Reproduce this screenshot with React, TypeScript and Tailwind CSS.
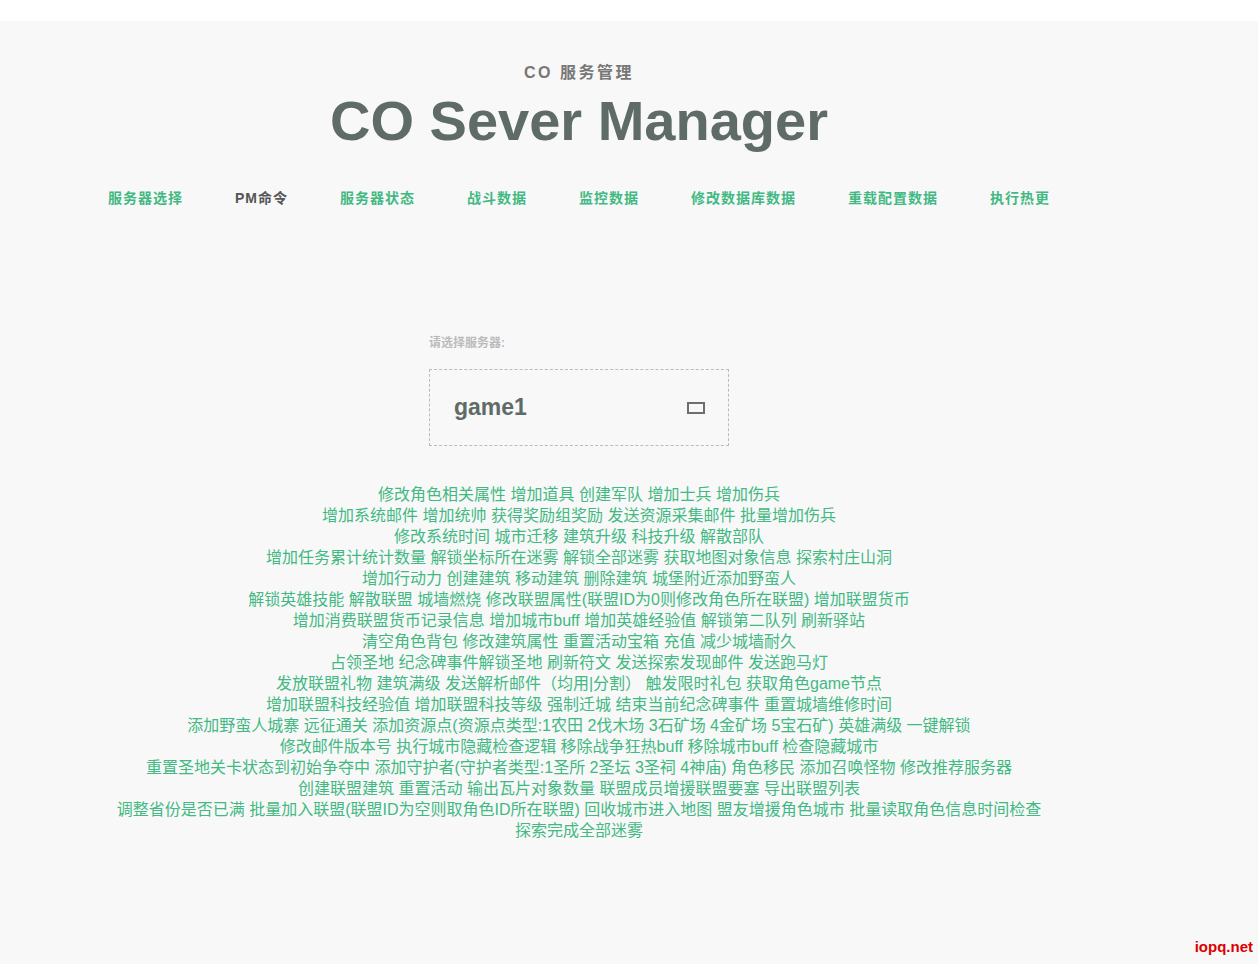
import { useState } from 'react'

const navItems = ['服务器选择', 'PM命令', '服务器状态', '战斗数据', '监控数据', '修改数据库数据', '重载配置数据', '执行热更']

const commandLines: string[][] = [
  ['修改角色相关属性', '增加道具', '创建军队', '增加士兵', '增加伤兵'],
  ['增加系统邮件', '增加统帅', '获得奖励组奖励', '发送资源采集邮件', '批量增加伤兵'],
  ['修改系统时间', '城市迁移', '建筑升级', '科技升级', '解散部队'],
  ['增加任务累计统计数量', '解锁坐标所在迷雾', '解锁全部迷雾', '获取地图对象信息', '探索村庄山洞'],
  ['增加行动力', '创建建筑', '移动建筑', '删除建筑', '城堡附近添加野蛮人'],
  ['解锁英雄技能', '解散联盟', '城墙燃烧', '修改联盟属性(联盟ID为0则修改角色所在联盟)', '增加联盟货币'],
  ['增加消费联盟货币记录信息', '增加城市buff', '增加英雄经验值', '解锁第二队列', '刷新驿站'],
  ['清空角色背包', '修改建筑属性', '重置活动宝箱', '充值', '减少城墙耐久'],
  ['占领圣地', '纪念碑事件解锁圣地', '刷新符文', '发送探索发现邮件', '发送跑马灯'],
  ['发放联盟礼物', '建筑满级', '发送解析邮件（均用|分割）', '触发限时礼包', '获取角色game节点'],
  ['增加联盟科技经验值', '增加联盟科技等级', '强制迁城', '结束当前纪念碑事件', '重置城墙维修时间'],
  ['添加野蛮人城寨', '远征通关', '添加资源点(资源点类型:1农田 2伐木场 3石矿场 4金矿场 5宝石矿)', '英雄满级', '一键解锁'],
  ['修改邮件版本号', '执行城市隐藏检查逻辑', '移除战争狂热buff', '移除城市buff', '检查隐藏城市'],
  ['重置圣地关卡状态到初始争夺中', '添加守护者(守护者类型:1圣所 2圣坛 3圣祠 4神庙)', '角色移民', '添加召唤怪物', '修改推荐服务器'],
  ['创建联盟建筑', '重置活动', '输出瓦片对象数量', '联盟成员增援联盟要塞', '导出联盟列表'],
  ['调整省份是否已满', '批量加入联盟(联盟ID为空则取角色ID所在联盟)', '回收城市进入地图', '盟友增援角色城市', '批量读取角色信息时间检查'],
  ['探索完成全部迷雾'],
]

export default function App() {
  const [active, setActive] = useState('PM命令')
  const [server] = useState('game1')

  return (
    <div className="relative h-screen bg-white pt-[21px] font-['Liberation_Sans','Noto_Sans_CJK_SC',sans-serif]">
      <div className="h-full bg-[#f8f8f8] mr-px">
        <div className="w-[1158px] flex flex-col items-center">
          <p className="mt-[41px] text-[16px] leading-[22px] font-bold tracking-[2.5px] text-[#777777]">CO 服务管理</p>
          <h1 className="mt-[9px] text-[56px] leading-[56px] font-bold text-[#5f6b66]">CO Sever Manager</h1>

          <nav className="mt-[39px] flex">
            {navItems.map((item) => (
              <a
                key={item}
                href="#"
                onClick={(e) => {
                  e.preventDefault()
                  setActive(item)
                }}
                className={`px-[26px] text-[14px] leading-[20px] font-bold tracking-[1px] ${active === item ? 'text-[#555555]' : 'text-[#42b983]'}`}
              >
                {item}
              </a>
            ))}
          </nav>

          <div className="mt-[127px] w-[300px]">
            <p className="text-[12px] leading-[16px] font-bold text-[#bbbbbb]">请选择服务器:</p>
            <div className="mt-[18px] h-[77px] flex items-center justify-between border border-dashed border-[#bbbbbb] pl-[24px] pr-[23px]">
              <span className="text-[23px] font-bold text-[#5f6b66]">{server}</span>
              <span className="w-[18px] h-[12px] border-2 border-[#6e6e6e]" />
            </div>
          </div>

          <div className="mt-[38px] text-center text-[16px] leading-[21px] text-[#42b983]">
            {commandLines.map((line, i) => (
              <div key={i}>
                {line.map((cmd, j) => (
                  <span key={cmd}>
                    {j > 0 && ' '}
                    <a href="#" className="hover:underline">{cmd}</a>
                  </span>
                ))}
              </div>
            ))}
          </div>
        </div>
      </div>
      <span className="absolute right-[6px] bottom-[6px] text-[15px] font-bold text-[#dd0000]">iopq.net</span>
    </div>
  )
}
